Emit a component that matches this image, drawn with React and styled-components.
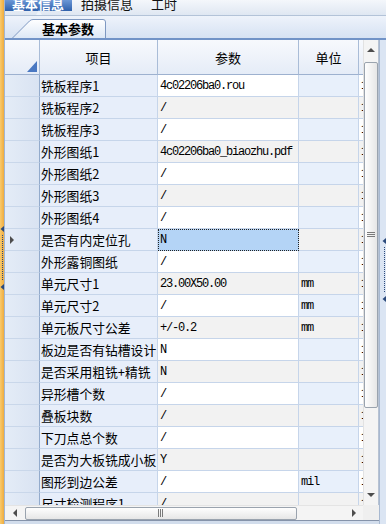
import React from 'react'
import styled, { createGlobalStyle, css } from 'styled-components'

const GlobalStyle = createGlobalStyle`
  html, body { margin: 0; padding: 0; background: #fff; }
  body {
    font-family: "Noto Sans CJK SC", "Liberation Sans", sans-serif;
    font-size: 13px;
    color: #000;
  }
  * { box-sizing: border-box; }
`

const COLS = '35px 118px 141px 60px 40px'

const rows = [
  ['铣板程序1', '4c02206ba0.rou', ''],
  ['铣板程序2', '/', ''],
  ['铣板程序3', '/', ''],
  ['外形图纸1', '4c02206ba0_biaozhu.pdf', ''],
  ['外形图纸2', '/', ''],
  ['外形图纸3', '/', ''],
  ['外形图纸4', '/', ''],
  ['是否有内定位孔', 'N', ''],
  ['外形露铜图纸', '/', ''],
  ['单元尺寸1', '23.00X50.00', 'mm'],
  ['单元尺寸2', '/', 'mm'],
  ['单元板尺寸公差', '+/-0.2', 'mm'],
  ['板边是否有钻槽设计', 'N', ''],
  ['是否采用粗铣+精铣', 'N', ''],
  ['异形槽个数', '/', ''],
  ['叠板块数', '/', ''],
  ['下刀点总个数', '/', ''],
  ['是否为大板铣成小板', 'Y', ''],
  ['图形到边公差', '/', 'mil'],
  ['尺寸检测程序1', '/', ''],
  ['尺寸检测程序2', '/', ''],
]

const SELECTED = 7

const Frame = styled.div`
  width: 386px;
  height: 524px;
  display: flex;
  overflow: hidden;
`

const LeftEdge = styled.div`
  flex: none;
  width: 5px;
  padding-top: 226px;
  background: linear-gradient(to right, #f9ca6c, #efac3e);
  border-right: 1px solid #a3b5cf;
`

const Main = styled.div`
  flex: 1;
  min-width: 0;
  display: flex;
  flex-direction: column;
`

const TabStrip = styled.div`
  flex: none;
  height: 16px;
  display: flex;
  align-items: flex-start;
  background: linear-gradient(#f4f7fb, #dfe7f2);
  border-bottom: 1px solid #b3c3d8;
`

const TopTab = styled.div`
  position: relative;
  height: 11px;
  line-height: 7px;
  padding: 0 9px;
  font-size: 13px;
  white-space: nowrap;
  color: #111;
  ${p => p.$active && css`
    padding: 0 8px 0 7px;
    font-weight: 700;
    color: #fff;
    background: linear-gradient(#6b97d6, #2f61ac);
    &::after {
      content: '';
      position: absolute;
      left: 50%;
      top: 10px;
      transform: translateX(-50%);
      border-left: 3px solid transparent;
      border-right: 3px solid transparent;
      border-bottom: 5px solid #eef3fa;
    }
  `}
`

const SubHeader = styled.div`
  flex: none;
  height: 22px;
  display: flex;
  align-items: flex-end;
  background: linear-gradient(#eef3fb, #d6e2f3);
`

const SubTab = styled.div`
  position: relative;
  width: 94px;
  height: 19px;
  margin-left: 7px;
  padding-left: 30px;
  display: flex;
  align-items: center;
  font-size: 13px;
  font-weight: 700;
  & > svg { position: absolute; left: 0; top: 0; }
  & > span { position: relative; }
`

const GridPanel = styled.div`
  flex: 1;
  display: grid;
  grid-template-columns: 358px 16px 7px;
  grid-template-rows: 465px 15px 4px;
  border-top: 2px solid #7193c7;
`

const Table = styled.div`
  overflow: hidden;
  background: #fff;
`

const Row = styled.div`
  display: grid;
  grid-template-columns: ${COLS};
  width: max-content;
`

const HeadCell = styled.div`
  height: 35px;
  display: flex;
  align-items: center;
  justify-content: center;
  background: linear-gradient(#f7f9fd, #e5ecf7);
  border-right: 1px solid #a9bcd7;
  border-bottom: 1px solid #9db1cf;
  font-size: 13px;
`

const CornerHead = styled(HeadCell)`
  align-items: flex-end;
  justify-content: flex-end;
  padding: 0 2px 2px 0;
`

const RowHead = styled.div`
  height: 22px;
  display: flex;
  align-items: center;
  padding-left: 4px;
  background: linear-gradient(to right, #e4ecf7, #d9e3f2);
  border-right: 1px solid #93abcc;
  border-bottom: 1px solid #c9d7ea;
`

const Cell = styled.div`
  height: 22px;
  display: flex;
  align-items: center;
  padding-left: 2px;
  white-space: nowrap;
  overflow: hidden;
  border-right: 1px solid #c6d5ea;
  border-bottom: 1px solid #c6d5ea;
  background: ${p => p.$bg};
`

const KeyCell = styled(Cell)`
  font-size: 12.8px;
  padding-left: 1px;
`

const ValueCell = styled(Cell)`
  font-family: "Liberation Mono", monospace;
  font-size: 12px;
  letter-spacing: -1.2px;
  ${p => p.$selected && css`
    border: 1px dotted #222;
    padding-left: 1px;
    background: #b4d4f6;
  `}
`

const VScroll = styled.div`
  display: flex;
  flex-direction: column;
  background: #f4f4f4;
  border-left: 1px solid #e2e2e2;
  border-right: 1px solid #b7c2d2;
`

const ArrowBtn = styled.div`
  flex: none;
  height: 20px;
  width: ${p => p.$w || 'auto'};
  display: flex;
  align-items: center;
  justify-content: center;
`

const Track = styled.div`
  flex: 1;
`

const VThumb = styled.div`
  flex: none;
  height: 346px;
  margin: 2px 0 0 0;
  border: 1px solid #9aa3ae;
  border-radius: 2px;
  background: linear-gradient(to right, #fefefe, #e6e6e6);
  display: flex;
  align-items: center;
  justify-content: center;
`

const Splitter = styled.div`
  grid-column: 3;
  grid-row: 1 / span 3;
  padding: 198px 0 0 2px;
  background: #dbe5f3;
  border-left: 1px solid #a7b8d0;
`

const HScroll = styled.div`
  display: flex;
  align-items: center;
  background: #f4f4f4;
  border-top: 1px solid #e4e4e4;
`

const HThumb = styled.div`
  flex: none;
  width: 272px;
  height: 13px;
  border: 1px solid #9aa3ae;
  border-radius: 2px;
  background: linear-gradient(#fefefe, #e6e6e6);
  display: flex;
  align-items: center;
  justify-content: center;
`

const Corner = styled.div`
  background: #efefef;
`

const BottomEdge = styled.div`
  grid-column: 1 / span 2;
  background: #d2ddec;
  border-top: 1px solid #8593aa;
`

const SplitGrip = () => (
  <svg width="4" height="64" viewBox="0 0 4 64">
    <path d="M4 0 L0.5 3 L4 6 Z" fill="#2b4a7c" />
    <line x1="2.5" y1="9" x2="2.5" y2="55" stroke="#2b4a7c" strokeDasharray="1 1" />
    <path d="M4 58 L0.5 61 L4 64 Z" fill="#2b4a7c" />
  </svg>
)

const Tri = ({ dir }) => {
  const d = {
    up: 'M0 5 L4 1 L8 5 Z',
    down: 'M0 1 L8 1 L4 5 Z',
    left: 'M5 0 L5 8 L1 4 Z',
    right: 'M1 0 L1 8 L5 4 Z',
  }[dir]
  const w = dir === 'up' || dir === 'down' ? 8 : 6
  const h = dir === 'up' || dir === 'down' ? 6 : 8
  return (
    <svg width={w} height={h} viewBox={`0 0 ${w} ${h}`}>
      <path d={d} fill="#4d4d4d" />
    </svg>
  )
}

export default function App() {
  return (
    <>
      <GlobalStyle />
      <Frame>
        <LeftEdge><SplitGrip /></LeftEdge>
        <Main>
          <TabStrip>
            <TopTab $active>基本信息</TopTab>
            <TopTab>拍摄信息</TopTab>
            <TopTab>工时</TopTab>
          </TabStrip>

          <SubHeader>
            <SubTab>
              <svg width="94" height="19" viewBox="0 0 94 19">
                <defs>
                  <linearGradient id="tabfill" x1="0" y1="0" x2="0" y2="1">
                    <stop offset="0" stopColor="#ffffff" />
                    <stop offset="1" stopColor="#dde8f6" />
                  </linearGradient>
                </defs>
                <path
                  d="M0.5 19 L17.5 2 Q19 0.5 21 0.5 L91 0.5 Q93.5 0.5 93.5 3 L93.5 19"
                  fill="url(#tabfill)"
                  stroke="#7e98c1"
                />
              </svg>
              <span>基本参数</span>
            </SubTab>
          </SubHeader>

          <GridPanel>
            <Table>
              <Row>
                <CornerHead>
                  <svg width="10" height="11" viewBox="0 0 10 11">
                    <path d="M10 0 L10 11 L0 11 Z" fill="#4a78c2" />
                  </svg>
                </CornerHead>
                <HeadCell>项目</HeadCell>
                <HeadCell>参数</HeadCell>
                <HeadCell>单位</HeadCell>
                <HeadCell />
              </Row>
              {rows.map(([key, value, unit], i) => {
                const even = i % 2 === 1
                return (
                  <Row key={i}>
                    <RowHead>{i === SELECTED && <Tri dir="right" />}</RowHead>
                    <KeyCell $bg="#e7eefa">{key}</KeyCell>
                    <ValueCell $bg={even ? '#f2f2f2' : '#ffffff'} $selected={i === SELECTED}>
                      {value}
                    </ValueCell>
                    <ValueCell $bg={even ? '#f2f2f2' : '#e8f0fb'}>{unit}</ValueCell>
                    <ValueCell $bg={even ? '#f2f2f2' : '#ffffff'}>1</ValueCell>
                  </Row>
                )
              })}
            </Table>

            <VScroll>
              <ArrowBtn><Tri dir="up" /></ArrowBtn>
              <VThumb>
                <svg width="8" height="6" viewBox="0 0 8 6">
                  <path d="M0 0.5 H8 M0 2.5 H8 M0 4.5 H8" stroke="#7a7a7a" />
                </svg>
              </VThumb>
              <Track />
              <ArrowBtn><Tri dir="down" /></ArrowBtn>
            </VScroll>

            <Splitter><SplitGrip /></Splitter>

            <HScroll>
              <ArrowBtn $w="20px"><Tri dir="left" /></ArrowBtn>
              <HThumb>
                <svg width="6" height="8" viewBox="0 0 6 8">
                  <path d="M0.5 0 V8 M2.5 0 V8 M4.5 0 V8" stroke="#7a7a7a" />
                </svg>
              </HThumb>
              <Track />
              <ArrowBtn $w="18px"><Tri dir="right" /></ArrowBtn>
            </HScroll>

            <Corner />
            <BottomEdge />
          </GridPanel>
        </Main>
      </Frame>
    </>
  )
}
